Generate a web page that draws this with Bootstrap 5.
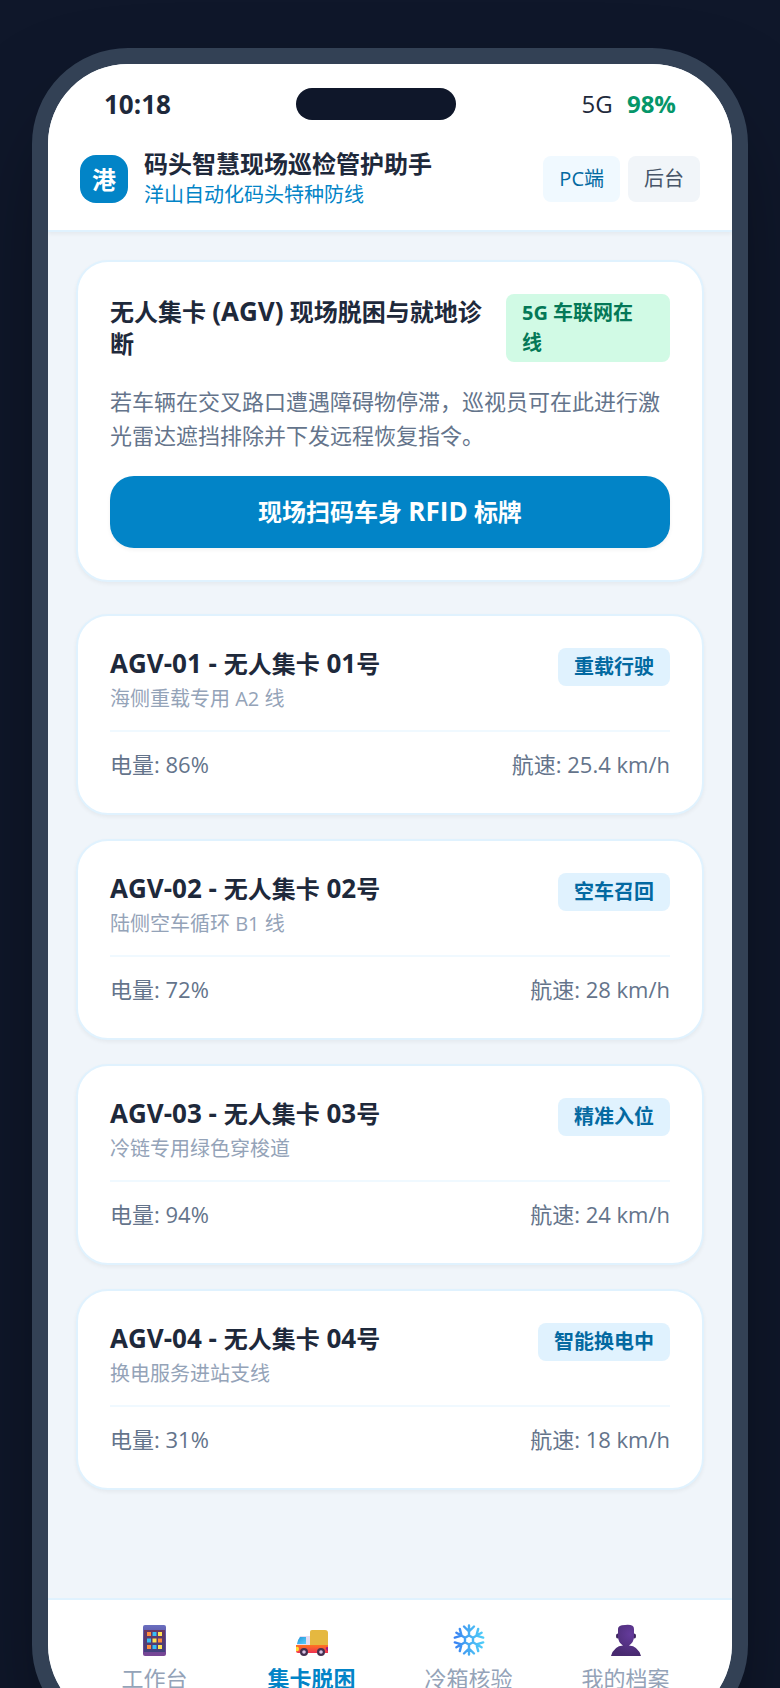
<!DOCTYPE html>
<html lang="zh-CN">
<head>
  <meta charset="UTF-8">
  <meta name="viewport" content="width=device-width, initial-scale=1">
  <title>码头智慧现场巡检管护助手</title>
  <link href="https://cdn.jsdelivr.net/npm/bootstrap@5.3.0/dist/css/bootstrap.min.css" rel="stylesheet">
  <style>
    body {
      font-family: "Open Sans", "Noto Sans CJK SC", sans-serif;
      font-size: 22px;
      line-height: 33px;
      color: #1e293b;
      background: #0f172a;
    }
    a { text-decoration: none; }
    .stage { padding: 48px 32px; }
    .phone {
      border: 16px solid #334155;
      border-radius: 96px;
      background: #f0f5fa;
      box-shadow: 0 50px 100px -24px rgba(0, 0, 0, .5);
    }
    .top-area {
      padding: 24px 32px 20px;
      border-bottom: 2px solid #e0f2fe;
      box-shadow: 0 2px 4px rgba(0, 0, 0, .05);
    }
    .status-row { padding: 0 24px; height: 32px; margin-bottom: 28px; line-height: 30px; font-size: 24px; }
    .latin { font-size: 26px; line-height: 28px; }
    .island { width: 160px; height: 32px; background: #0f172a; }
    .battery { color: #059669; }
    .logo {
      width: 48px;
      height: 48px;
      border-radius: 16px;
      background: #0284c7;
      font-size: 24px;
    }
    .title-text { font-size: 24px; line-height: 32px; font-weight: 700; margin: 0; }
    .sub-text { font-size: 20px; line-height: 30px; margin: 0; }
    .brand-sub { color: #0284c7; }
    .btn-mini {
      padding: 8px 16px;
      border: 0;
      border-radius: 8px;
      font-size: 20px;
      line-height: 30px;
    }
    .btn-pc, .btn-pc:hover { background: #f0f9ff; color: #0369a1; }
    .btn-admin, .btn-admin:hover { background: #f1f5f9; color: #475569; }
    main { padding: 28px 28px 108px; }
    .panel {
      padding: 32px;
      border: 2px solid #e0f2fe;
      border-radius: 32px;
      background: #fff;
      box-shadow: 0 2px 4px rgba(0, 0, 0, .05);
    }
    .panel-intro { margin-bottom: 32px; }
    .agv-list { gap: 24px; }
    .tag {
      padding: 4px 16px;
      border-radius: 8px;
      background: #e0f2fe;
      color: #0369a1;
      font-size: 20px;
      line-height: 30px;
      font-weight: 700;
    }
    .tag-online { flex: 0 0 164px; padding-right: 28px; background: #d1fae5; color: #047857; }
    .intro-text { margin: 22px 0 24px; line-height: 34px; color: #64748b; }
    .btn-scan, .btn-scan:hover {
      padding: 20px;
      border: 0;
      border-radius: 24px;
      background: #0284c7;
      color: #fff;
      font-size: 24px;
      line-height: 32px;
      font-weight: 700;
      box-shadow: 0 2px 4px rgba(0, 0, 0, .05);
    }
    .agv-line { margin-top: 4px; color: #94a3b8; }
    .agv-data {
      margin-top: 16px;
      padding-top: 16px;
      border-top: 2px solid #f0f9ff;
      color: #64748b;
    }
    .tab-bar {
      padding: 24px 28px 30px;
      border-top: 2px solid #e0f2fe;
      border-radius: 0 0 80px 80px;
    }
    .tab-item { flex: 1 1 0; color: #94a3b8; }
    .tab-item svg { width: 32px; height: 32px; margin-bottom: 6px; }
    .tab-item.active { color: #0284c7; font-weight: 700; }
  </style>
</head>
<body>

<div class="stage vh-100 overflow-hidden">
  <div class="phone overflow-hidden d-flex flex-column">

    <header class="top-area bg-white">
      <div class="status-row d-flex align-items-center justify-content-between">
        <div class="latin fw-bold">10:18</div>
        <div class="island rounded-pill"></div>
        <div><span>5G</span> <span class="battery fw-bold ms-2">98%</span></div>
      </div>
      <div class="d-flex align-items-center">
        <div class="logo d-flex align-items-center justify-content-center text-white fw-bold me-3">港</div>
        <div class="me-auto">
          <h1 class="title-text">码头智慧现场巡检管护助手</h1>
          <p class="sub-text brand-sub">洋山自动化码头特种防线</p>
        </div>
        <div class="d-flex gap-2">
          <button type="button" class="btn btn-mini btn-pc">PC端</button>
          <button type="button" class="btn btn-mini btn-admin">后台</button>
        </div>
      </div>
    </header>

    <main>
      <section class="panel panel-intro">
        <div class="d-flex align-items-center justify-content-between gap-3">
          <h2 class="title-text">无人集卡 <span class="latin">(AGV)</span> 现场脱困与就地诊断</h2>
          <span class="tag tag-online">5G 车联网在线</span>
        </div>
        <p class="intro-text">若车辆在交叉路口遭遇障碍物停滞，巡视员可在此进行激光雷达遮挡排除并下发远程恢复指令。</p>
        <button type="button" class="btn btn-scan w-100">现场扫码车身 <span class="latin">RFID</span> 标牌</button>
      </section>

      <div class="agv-list d-flex flex-column">
        <section class="panel">
          <div class="d-flex align-items-start justify-content-between">
            <div>
              <h3 class="title-text"><span class="latin">AGV-01 - </span>无人集卡<span class="latin"> 01</span>号</h3>
              <p class="sub-text agv-line">海侧重载专用 A2 线</p>
            </div>
            <span class="tag">重载行驶</span>
          </div>
          <div class="agv-data d-flex justify-content-between">
            <span>电量: 86%</span>
            <span>航速: 25.4 km/h</span>
          </div>
        </section>

        <section class="panel">
          <div class="d-flex align-items-start justify-content-between">
            <div>
              <h3 class="title-text"><span class="latin">AGV-02 - </span>无人集卡<span class="latin"> 02</span>号</h3>
              <p class="sub-text agv-line">陆侧空车循环 B1 线</p>
            </div>
            <span class="tag">空车召回</span>
          </div>
          <div class="agv-data d-flex justify-content-between">
            <span>电量: 72%</span>
            <span>航速: 28 km/h</span>
          </div>
        </section>

        <section class="panel">
          <div class="d-flex align-items-start justify-content-between">
            <div>
              <h3 class="title-text"><span class="latin">AGV-03 - </span>无人集卡<span class="latin"> 03</span>号</h3>
              <p class="sub-text agv-line">冷链专用绿色穿梭道</p>
            </div>
            <span class="tag">精准入位</span>
          </div>
          <div class="agv-data d-flex justify-content-between">
            <span>电量: 94%</span>
            <span>航速: 24 km/h</span>
          </div>
        </section>

        <section class="panel">
          <div class="d-flex align-items-start justify-content-between">
            <div>
              <h3 class="title-text"><span class="latin">AGV-04 - </span>无人集卡<span class="latin"> 04</span>号</h3>
              <p class="sub-text agv-line">换电服务进站支线</p>
            </div>
            <span class="tag">智能换电中</span>
          </div>
          <div class="agv-data d-flex justify-content-between">
            <span>电量: 31%</span>
            <span>航速: 18 km/h</span>
          </div>
        </section>
      </div>
    </main>

    <nav class="tab-bar bg-white d-flex">
      <a href="#" class="tab-item d-flex flex-column align-items-center">
        <!-- phone with app grid -->
        <svg viewBox="0 0 32 32" aria-hidden="true">
          <defs>
            <linearGradient id="gPhone" x1="0" y1="0" x2="0" y2="1">
              <stop offset="0" stop-color="#6a6fc0"/>
              <stop offset=".5" stop-color="#5a4a96"/>
              <stop offset="1" stop-color="#7a4696"/>
            </linearGradient>
            <linearGradient id="gScreen" x1="0" y1="0" x2="0" y2="1">
              <stop offset="0" stop-color="#6a3560"/>
              <stop offset="1" stop-color="#41407f"/>
            </linearGradient>
          </defs>
          <rect x="4" y="1" width="23" height="31" rx="2" fill="url(#gPhone)"/>
          <rect x="5" y="6" width="21" height="22" fill="url(#gScreen)"/>
          <g fill="#ff8b3d"><rect x="8" y="8" width="4" height="4"/><rect x="19" y="14.500" width="4" height="4"/><rect x="8" y="21" width="4" height="4"/></g>
          <g fill="#35bdf8"><rect x="13.500" y="8" width="4" height="4"/><rect x="8" y="14.500" width="4" height="4"/><rect x="13.500" y="21" width="4" height="4"/></g>
          <g fill="#ffe252"><rect x="19" y="8" width="4" height="4"/><rect x="13.500" y="14.500" width="4" height="4"/><rect x="19" y="21" width="4" height="4"/></g>
        </svg>
        <span>工作台</span>
      </a>
      <a href="#" class="tab-item active d-flex flex-column align-items-center" aria-current="page">
        <!-- truck -->
        <svg viewBox="0 0 32 32" aria-hidden="true">
          <defs>
            <linearGradient id="gBody" x1="0" y1="0" x2="0" y2="1">
              <stop offset="0" stop-color="#ff7420"/>
              <stop offset="1" stop-color="#ee3152"/>
            </linearGradient>
            <linearGradient id="gGlass" x1="0" y1="0" x2="1" y2="1">
              <stop offset="0" stop-color="#2196d8"/>
              <stop offset="1" stop-color="#5bcdf9"/>
            </linearGradient>
          </defs>
          <path d="M4 12Q5 12 6 12H15V22H1Q1 19 2 17Z" fill="#e5dcf0"/>
          <path d="M4 13H10V20H1Q2 15 4 13Z" fill="url(#gGlass)"/>
          <path d="M14 21V8Q14 6 16 6H29Q32 6 32 9V21Z" fill="#e5b840"/>
          <path d="M0 21H32V29H2Q0 29 0 27Z" fill="url(#gBody)"/>
          <path d="M0 23Q3 22 3 25T0 27Z" fill="#ffdf36"/>
          <path d="M32 23Q29 23 30 25T32 27Z" fill="#a9127f"/>
          <g fill="#43304f"><circle cx="8" cy="28" r="4"/><circle cx="25" cy="28" r="4"/></g>
          <g fill="#d9c5e6"><circle cx="8" cy="28" r="1.800"/><circle cx="25" cy="28" r="1.800"/></g>
        </svg>
        <span>集卡脱困</span>
      </a>
      <a href="#" class="tab-item d-flex flex-column align-items-center">
        <!-- snowflake -->
        <svg viewBox="0 0 32 32" aria-hidden="true">
          <defs>
            <linearGradient id="gSnow" gradientUnits="userSpaceOnUse" x1="0" y1="16" x2="32" y2="16">
              <stop offset="0" stop-color="#367af2"/>
              <stop offset=".5" stop-color="#48adf3"/>
              <stop offset="1" stop-color="#4fd0fa"/>
            </linearGradient>
          </defs>
          <g fill="none" stroke="url(#gSnow)" stroke-width="2.400" stroke-linecap="round" stroke-linejoin="round">
            <path d="M16 11.500L20 13.800V18.200L16 20.500L12 18.200V13.800Z"/>
            <path d="M16 11V1.500M11 2.500L16 7.500L21 2.500"/>
            <path d="M16 21V30.500M11 29.500L16 24.500L21 29.500"/>
            <path d="M20.300 13.500L28.600 8.700M25.200 4.900L23.400 11.700L30.200 13.600"/>
            <path d="M11.700 18.500L3.400 23.300M6.800 27.100L8.600 20.300L1.800 18.400"/>
            <path d="M20.300 18.500L28.600 23.300M30.200 18.400L23.400 20.300L25.200 27.100"/>
            <path d="M11.700 13.500L3.400 8.700M1.800 13.600L8.600 11.700L6.800 4.900"/>
          </g>
        </svg>
        <span>冷箱核验</span>
      </a>
      <a href="#" class="tab-item d-flex flex-column align-items-center">
        <!-- person bust -->
        <svg viewBox="0 0 32 32" aria-hidden="true">
          <defs>
            <radialGradient id="gBust" cx=".65" cy=".3" r=".7">
              <stop offset="0" stop-color="#643b9b"/>
              <stop offset="1" stop-color="#482a70"/>
            </radialGradient>
          </defs>
          <ellipse cx="7.500" cy="12" rx="1.500" ry="2.500" fill="#3c245d"/>
          <ellipse cx="24.500" cy="12" rx="1.500" ry="2.500" fill="#3c245d"/>
          <path d="M8 5Q8 1 15 1Q24 0 24 5V13Q24 18 19 21.500Q28 22 31 32H1Q4 22 13 21.500Q8 18 8 13Z" fill="url(#gBust)"/>
        </svg>
        <span>我的档案</span>
      </a>
    </nav>

  </div>
</div>

<script src="https://cdn.jsdelivr.net/npm/bootstrap@5.3.0/dist/js/bootstrap.bundle.min.js"></script>
</body>
</html>
